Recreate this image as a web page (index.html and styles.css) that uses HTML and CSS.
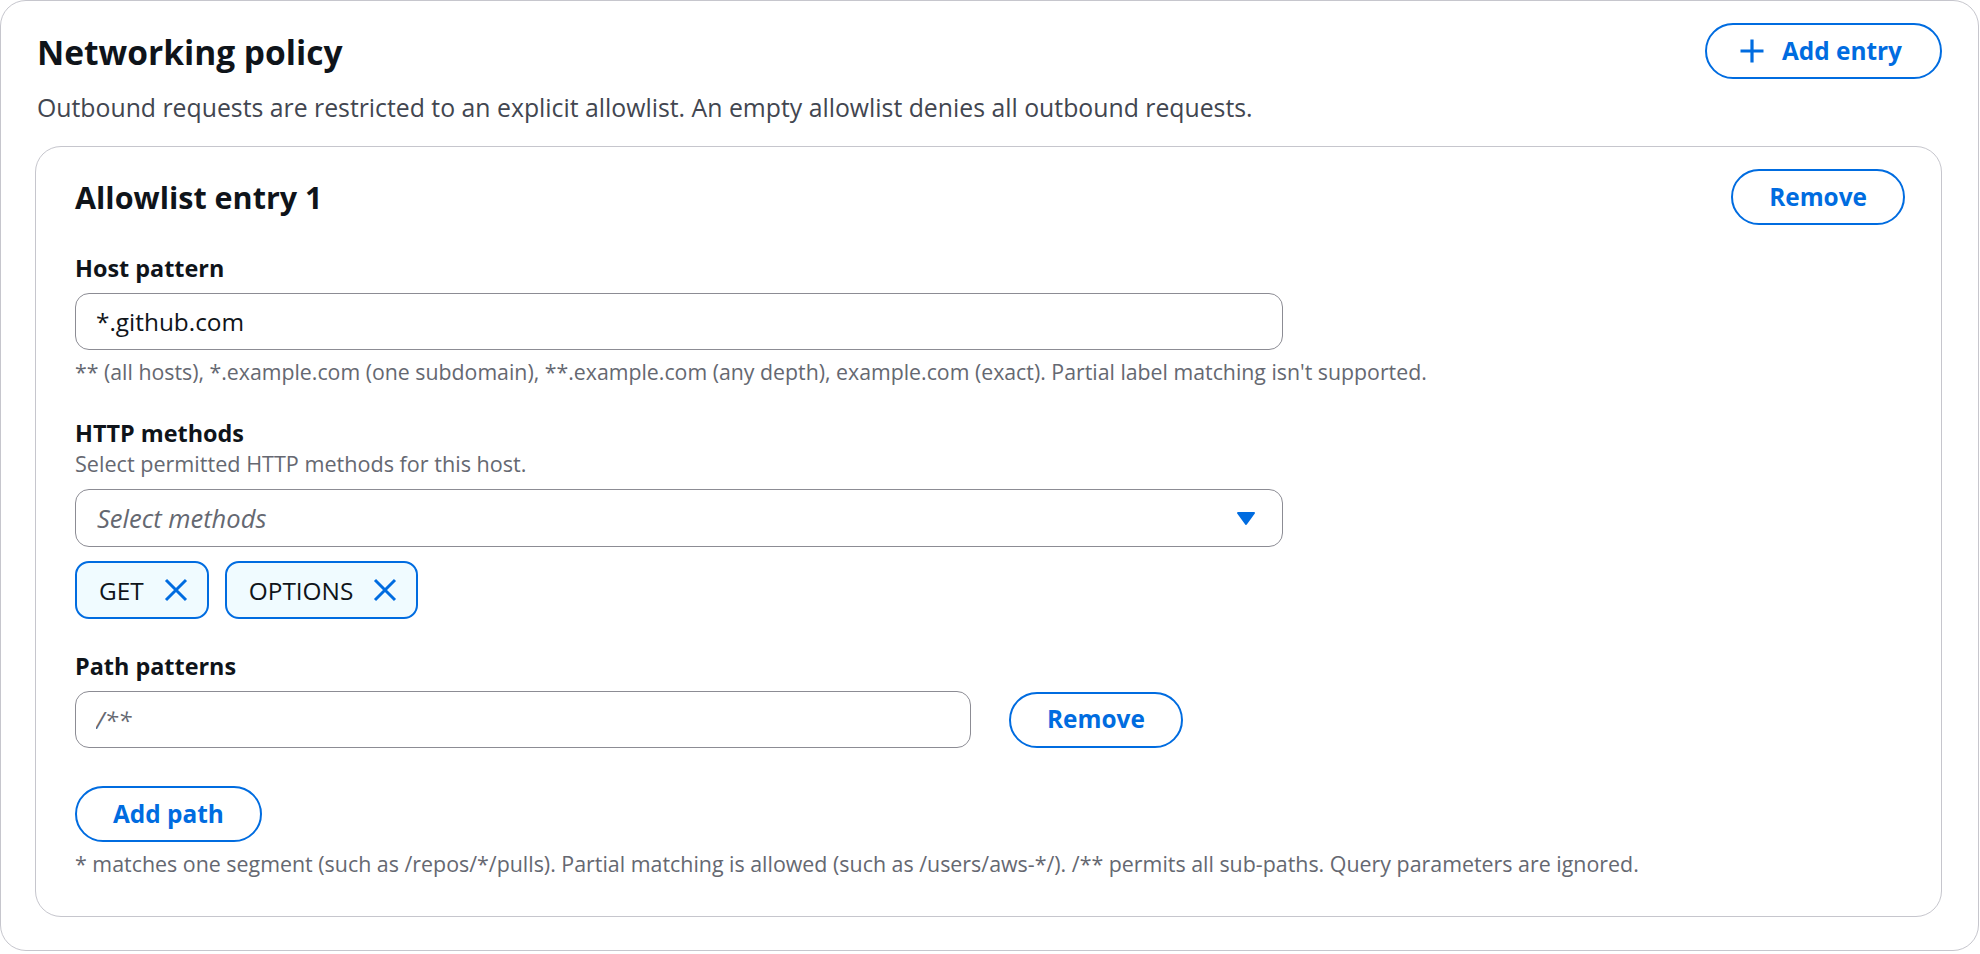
FILE: index.html
```html
<!DOCTYPE html>
<html lang="en">

<head>
    <meta charset="utf-8">
    <meta name="viewport" content="width=device-width, initial-scale=1.0">
    <title>Networking policy</title>
    <link rel="stylesheet" href="styles.css">
</head>

<body>

    <div class="panel">
        <header class="panel-head">
            <div class="head-text">
                <h1>Networking policy</h1>
                <p class="lead">Outbound requests are restricted to an explicit allowlist. An empty allowlist denies all outbound requests.</p>
            </div>
            <button class="btn btn-add">
                <svg class="plus" width="24" height="24" viewBox="0 0 24 24"><path d="M0.5 12h23M12 0.5v23" /></svg>
                Add entry
            </button>
        </header>

        <section class="entry">
            <div class="entry-head">
                <h2>Allowlist entry 1</h2>
                <button class="btn">Remove</button>
            </div>

            <div class="field field-host">
                <label class="field-label" for="host">Host pattern</label>
                <input class="text-input" id="host" type="text" value="*.github.com">
                <p class="constraint">** (all hosts), *.example.com (one subdomain), **.example.com (any depth), example.com (exact). Partial label matching isn't supported.</p>
            </div>

            <div class="field">
                <span class="field-label">HTTP methods</span>
                <p class="field-desc">Select permitted HTTP methods for this host.</p>
                <div class="select">
                    <span class="placeholder">Select methods</span>
                    <svg class="caret" width="20" height="15" viewBox="0 0 20 15"><polygon points="2,2 18,2 10,13" /></svg>
                </div>
                <div class="tokens">
                    <span class="token">GET
                        <svg class="dismiss" width="24" height="24" viewBox="0 0 24 24"><path d="M2 2l20 20M22 2L2 22" /></svg>
                    </span>
                    <span class="token">OPTIONS
                        <svg class="dismiss" width="24" height="24" viewBox="0 0 24 24"><path d="M2 2l20 20M22 2L2 22" /></svg>
                    </span>
                </div>
            </div>

            <div class="field field-path">
                <label class="field-label" for="path1">Path patterns</label>
                <div class="path-row">
                    <input class="text-input" id="path1" type="text" placeholder="/**">
                    <button class="btn">Remove</button>
                </div>
                <button class="btn add-path">Add path</button>
                <p class="constraint constraint-wide">* matches one segment (such as /repos/*/pulls). Partial matching is allowed (such as /users/aws-*/). /** permits all sub-paths. Query parameters are ignored.</p>
            </div>
        </section>
    </div>

</body>

</html>
```

FILE: styles.css
```css
* {
    box-sizing: border-box;
}

body {
    margin: 0;
    font-family: "Open Sans", sans-serif;
    color: #0f141a;
    background-color: #ffffff;
}

.panel {
    width: 1979px;
    height: 951px;
    border: 1px solid #c6c6cd;
    border-radius: 26px;
    padding: 22px 36px 0 34px;
}

.panel-head {
    display: flex;
    justify-content: space-between;
    align-items: flex-start;
    padding-left: 2px;
}

h1 {
    margin: 9px 0 0;
    font-size: 33.5px;
    line-height: 41px;
    font-weight: 700;
}

.lead {
    margin: 17px 0 0;
    font-size: 24.8px;
    line-height: 34px;
    color: #424650;
}

/* pill buttons */
.btn {
    height: 56px;
    display: inline-flex;
    align-items: center;
    gap: 18px;
    padding: 0 36px;
    border: 2px solid #006ce0;
    border-radius: 28px;
    background-color: #ffffff;
    color: #006ce0;
    font: 700 24.4px/1 "Open Sans", sans-serif;
    cursor: pointer;
}

.btn-add {
    padding: 0 38px 0 33px;
}

.plus path {
    stroke: #006ce0;
    stroke-width: 3.2;
    fill: none;
}

.entry {
    margin-top: 22px;
    border: 1px solid #c6c6cd;
    border-radius: 26px;
    padding: 22px 36px 38px 39px;
}

.entry-head {
    display: flex;
    justify-content: space-between;
    align-items: center;
}

h2 {
    margin: 0;
    font-size: 30.5px;
    line-height: 38px;
    font-weight: 700;
}

.field {
    margin-top: 30px;
}

.field-host {
    margin-top: 26px;
}

.field-label {
    display: block;
    font-size: 23.4px;
    line-height: 34px;
    font-weight: 700;
}

.text-input {
    display: block;
    width: 1208px;
    height: 57px;
    margin-top: 8px;
    padding: 0 20px;
    border: 1px solid #8c8c94;
    border-radius: 14px;
    font: 24.4px "Open Sans", sans-serif;
    color: #0f141a;
    outline: none;
}

.text-input::placeholder {
    font-style: italic;
    color: #656871;
}

.constraint {
    margin: 8px 0 0;
    font-size: 21.3px;
    line-height: 28px;
    color: #656871;
}

.constraint-wide {
    font-size: 21.4px;
}

.field-desc {
    margin: 0;
    font-size: 21.6px;
    line-height: 28px;
    color: #656871;
}

.select {
    width: 1208px;
    height: 58px;
    margin-top: 11px;
    display: flex;
    align-items: center;
    justify-content: space-between;
    padding: 0 26px 0 21px;
    border: 1px solid #8c8c94;
    border-radius: 14px;
}

.placeholder {
    font-size: 25.5px;
    font-style: italic;
    color: #656871;
}

.caret polygon {
    fill: #006ce0;
    stroke: #006ce0;
    stroke-width: 2;
    stroke-linejoin: round;
}

.tokens {
    display: flex;
    gap: 16px;
    margin-top: 14px;
}

.token {
    height: 58px;
    display: inline-flex;
    align-items: center;
    gap: 20px;
    padding: 0 19px 0 22px;
    border: 2px solid #006ce0;
    border-radius: 14px;
    background-color: #f0fbff;
    font-size: 24.4px;
}

.dismiss path {
    stroke: #006ce0;
    stroke-width: 3;
    fill: none;
}

.path-row {
    display: flex;
    align-items: center;
    gap: 38px;
    margin-top: 8px;
}

.path-row .text-input {
    width: 896px;
    margin-top: 0;
}

.add-path {
    margin-top: 38px;
}

.field-path .constraint {
    margin-top: 8px;
}
```
